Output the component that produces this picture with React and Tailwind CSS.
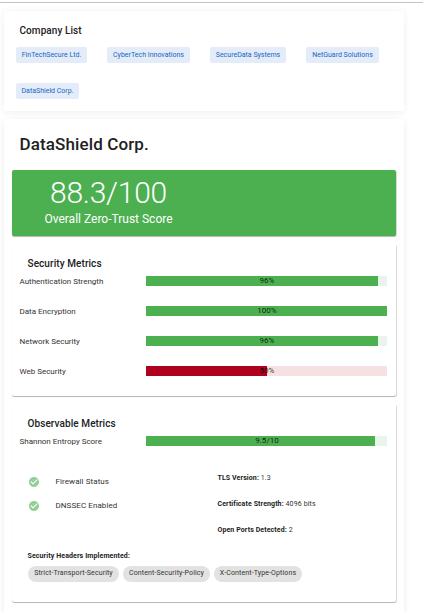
import React from "react";

const companies = [
  ["FinTechSecure Ltd.", "w-[71px]"],
  ["CyberTech Innovations", "w-[83px]"],
  ["SecureData Systems", "w-[76px]"],
  ["NetGuard Solutions", "w-[73px]"],
  ["DataShield Corp.", "w-[63px]"],
];

const metrics = [
  { label: "Authentication Strength", value: 96, text: "96%" },
  { label: "Data Encryption", value: 100, text: "100%" },
  { label: "Network Security", value: 96, text: "96%" },
  { label: "Web Security", value: 50, text: "50%", bad: true },
];

const headers = [
  ["Strict-Transport-Security", "w-[91px]"],
  ["Content-Security-Policy", "w-[87px]"],
  ["X-Content-Type-Options", "w-[88px]"],
];

const BAR_WIDTH = 241;

const outerShadow = "shadow-[0_1px_7px_rgba(0,0,0,0.07)]";
const innerShadow =
  "shadow-[0_1px_0_-0.5px_rgba(0,0,0,0.3),0.5px_1px_1px_rgba(0,0,0,0.16)]";

function Metric({ label, value, text, bad }) {
  return (
    <div className="flex h-[30px] items-start pl-[7.5px] pr-[9px]">
      <div className="w-[126.5px] shrink-0 pt-px text-[8px] leading-[10px] tracking-[-0.01px] text-[#333]">{label}</div>
      <div className={`relative h-[10px] w-[241px] ${bad ? "bg-[#f5e0e2]" : "bg-[#e9f5ea]"}`}>
        <div
          className={`h-full ${bad ? "bg-[#b00020]" : "bg-[#4caf50]"}`}
          style={{ width: Math.ceil((BAR_WIDTH * value) / 100) }}
        />
        <div className="absolute inset-0 pl-px text-center text-[8px] leading-[10px] tracking-[0.05px] text-black/80">{text}</div>
      </div>
    </div>
  );
}

function Check({ label }) {
  return (
    <div className="flex h-6 items-center">
      <svg viewBox="0 0 24 24" className="h-[12px] w-[12px] fill-[#94cf96]">
        <path d="M12 2C6.5 2 2 6.5 2 12S6.5 22 12 22 22 17.5 22 12 17.5 2 12 2M10 17L5 12L6.41 10.59L10 14.17L17.59 6.58L19 8L10 17Z" />
      </svg>
      <span className="ml-4 text-[8px] leading-[10px] tracking-[0.08px] text-[#333]">{label}</span>
    </div>
  );
}

function Detail({ label, value }) {
  return (
    <div className="h-[26px] text-[7px] leading-[10px] tracking-[0.12px] text-[#333]">
      <b className="font-bold tracking-[0.1px] text-[#222]">{label}:</b> {value}
    </div>
  );
}

export default function App() {
  return (
    <div className="h-[612px] w-[423px] overflow-hidden bg-white font-['Roboto',sans-serif] text-[#212121]">
      <div className="h-[3px] border-b border-[#c4c4c4]" />
      <div className="ml-1 mt-2 flex w-[400px] flex-col gap-2">
        <section className={`h-[100px] rounded-[2px] bg-white px-3 pt-3 ${outerShadow}`}>
          <h2 className="ml-[3.5px] h-6 text-[10px] font-medium leading-4 tracking-[0.08px]">Company List</h2>
          <div className="flex flex-wrap gap-5">
            {companies.map(([name, width]) => (
              <span key={name} className={`${width} h-4 whitespace-nowrap rounded-[2px] bg-[#e3ecf8] text-center text-[7px] leading-[16px] text-[#1867c0]`}>
                {name}
              </span>
            ))}
          </div>
        </section>

        <section className={`h-[520px] rounded-[2px] bg-white px-2 ${outerShadow}`}>
          <h1 className="h-[51px] pl-[7.5px] pt-[13px] text-[17px] font-medium leading-6 tracking-[0.12px]">DataShield Corp.</h1>
          <div className="flex flex-col gap-2">
            <div className={`h-[66px] rounded-[2px] bg-[#4caf50] text-white ${innerShadow}`}>
              <div className="w-[193px] text-center">
                <div className="pt-2 text-[30px] font-light leading-[30px] tracking-[-0.25px]">88.3/100</div>
                <div className="pt-[4px] text-[12px] leading-[14px]">Overall Zero-Trust Score</div>
              </div>
            </div>

            <div className={`h-[152px] rounded-[2px] bg-white ${innerShadow}`}>
              <h3 className="h-8 pl-[15.5px] pt-3 text-[10px] font-medium leading-4 tracking-[0.08px]">Security Metrics</h3>
              {metrics.map((m) => (
                <Metric key={m.label} {...m} />
              ))}
            </div>

            <div className={`h-[198px] rounded-[2px] bg-white ${innerShadow}`}>
              <h3 className="h-8 pl-[15.5px] pt-3 text-[10px] font-medium leading-4 tracking-[0.08px]">Observable Metrics</h3>
              <Metric label="Shannon Entropy Score" value={95} text="9.5/10" />
              <div className="flex h-[84px] pl-[15.5px]">
                <div className="w-[190px] pt-[4px]">
                  <Check label="Firewall Status" />
                  <Check label="DNSSEC Enabled" />
                </div>
                <div className="pt-[7px]">
                  <Detail label="TLS Version" value="1.3" />
                  <Detail label="Certificate Strength" value="4096 bits" />
                  <Detail label="Open Ports Detected" value="2" />
                </div>
              </div>
              <div className="pl-4">
                <div className="-ml-[0.5px] h-4 text-[7px] font-bold leading-[12px] tracking-[0.11px] text-[#222]">Security Headers Implemented:</div>
                <div className="flex gap-1">
                  {headers.map(([name, width]) => (
                    <span key={name} className={`${width} h-4 whitespace-nowrap rounded-full bg-[#e2e2e2] text-center text-[7px] leading-[14px] tracking-[0.12px] text-[#333]`}>
                      {name}
                    </span>
                  ))}
                </div>
              </div>
            </div>
          </div>
        </section>
      </div>
    </div>
  );
}
